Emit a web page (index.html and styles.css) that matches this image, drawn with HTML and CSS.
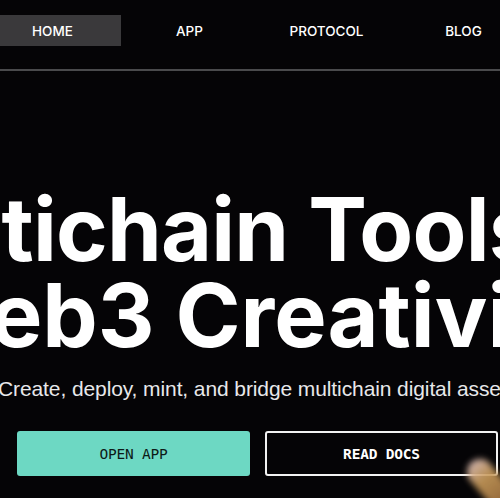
FILE: index.html
```html
<!DOCTYPE html>
<html lang="en">
<head>
<meta charset="utf-8">
<title>Multichain Tools</title>
<link rel="stylesheet" href="styles.css">
</head>
<body>
<div class="page">
  <header class="header">
    <nav class="nav">
      <a class="nav-item active" href="#">HOME</a>
      <a class="nav-item" href="#">APP</a>
      <a class="nav-item" href="#">PROTOCOL</a>
      <a class="nav-item" href="#">BLOG</a>
    </nav>
  </header>
  <main class="hero">
    <h1 class="title">
      <span class="line line1">Multichain Tools for</span>
      <span class="line line2">Web3 Creativity</span>
    </h1>
    <p class="sub">Create, deploy, mint, and bridge multichain digital assets</p>
    <div class="actions">
      <a class="btn btn-primary" href="#">OPEN APP</a>
      <a class="btn btn-outline" href="#">READ DOCS</a>
    </div>
  </main>
  <div class="finger"></div>
</div>
</body>
</html>
```
FILE: styles.css
```css
html, body {
  margin: 0;
  padding: 0;
  background: #050406;
  overflow: hidden;
}
.page {
  position: relative;
  width: 500px;
  height: 498px;
  overflow: hidden;
  background: #050406;
  font-family: "Liberation Sans", Arial, sans-serif;
  color: #fff;
}
.header {
  padding-top: 15px;
  border-bottom: 2px solid #4a4a4c;
  box-sizing: border-box;
  height: 71px;
}
.nav {
  display: flex;
  margin-left: -16px;
}
.nav-item {
  flex: 0 0 137px;
  height: 31px;
  display: flex;
  align-items: center;
  justify-content: center;
  color: #fff;
  text-decoration: none;
  font-family: Inter, "Liberation Sans", sans-serif;
  font-weight: 500;
  font-size: 13.5px;
}
.nav-item.active {
  background: #3a393b;
}
.hero {
  padding-top: 115px;
}
.title {
  margin: 0;
  font-family: Inter, "Liberation Sans", sans-serif;
  font-size: 88px;
  line-height: 86px;
  font-weight: 700;
  white-space: nowrap;
  letter-spacing: 0;
}
.line {
  display: block;
}
.line1 {
  margin-left: -158px;
  letter-spacing: -0.8px;
}
.line2 {
  margin-left: -97px;
}
.sub {
  margin: 19px 0 0 -2px;
  font-size: 21px;
  line-height: 24px;
  color: #e8e8ea;
  white-space: nowrap;
  letter-spacing: -0.1px;
}
.actions {
  display: flex;
  gap: 15px;
  margin: 30px 0 0 17px;
}
.btn {
  width: 233px;
  height: 45px;
  box-sizing: border-box;
  border-radius: 3px;
  display: flex;
  align-items: center;
  justify-content: center;
  text-decoration: none;
  font-family: "DejaVu Sans Mono", monospace;
  font-size: 14.5px;
  letter-spacing: -0.2px;
}
.btn-primary {
  background: #6dd8c3;
  color: #0d1a17;
}
.btn-outline {
  border: 2px solid #f2f2f2;
  color: #fff;
  font-weight: 700;
}
.finger {
  position: absolute;
  left: 478px;
  top: 455px;
  width: 26px;
  height: 60px;
  border-radius: 13px;
  background: linear-gradient(180deg, #e7c7c0 0%, #c99b5a 35%, #9a6a3a 100%);
  transform: rotate(-40deg);
  filter: blur(3px);
  opacity: 0.9;
}
```
